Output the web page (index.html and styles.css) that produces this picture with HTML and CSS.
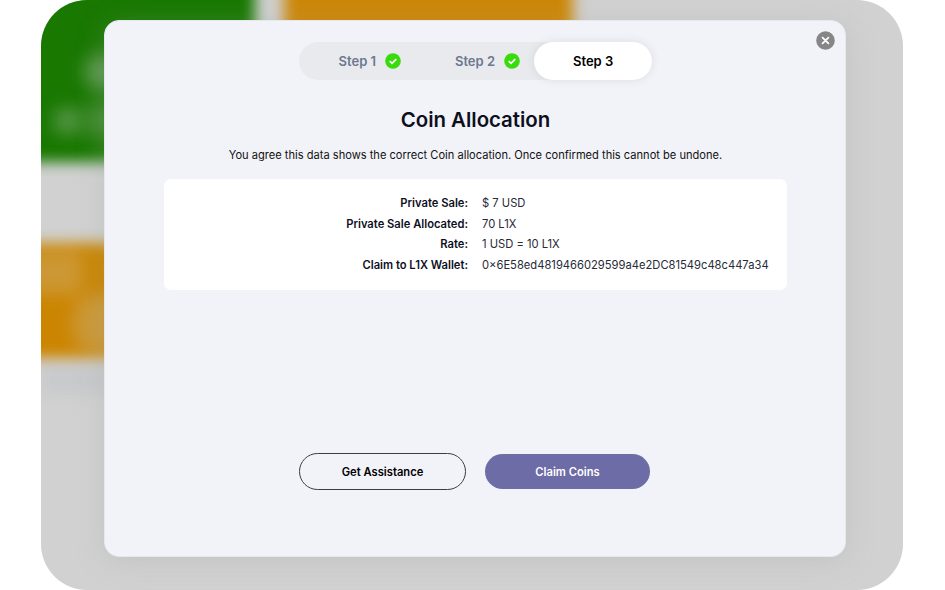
FILE: index.html
```html
<!DOCTYPE html>
<html lang="en">
<head>
	<meta charset="UTF-8">
	<meta name="viewport" content="width=device-width, initial-scale=1.0">
	<title>Coin Allocation</title>
	<link rel="stylesheet" href="styles.css">
</head>
<body>
	<div class="screen">
		<div class="backdrop">
			<div class="tile tile-green"></div>
			<div class="tile tile-orange-top"></div>
			<div class="tile tile-orange-left"></div>
			<div class="smudge smudge-icon"></div>
			<div class="smudge smudge-label"></div>
			<div class="smudge smudge-label-end"></div>
			<div class="smudge smudge-title"></div>
			<div class="smudge smudge-value"></div>
			<div class="smudge smudge-caption"></div>
		</div>
		<div class="modal">
			<button type="button" class="close" aria-label="Close">
				<svg viewBox="0 0 19 19" width="19" height="19">
					<circle cx="9.5" cy="9.5" r="9.3" fill="#868686"/>
					<path d="M6.6 6.6l5.8 5.8M12.4 6.6l-5.8 5.8" stroke="#fff" stroke-width="1.8" stroke-linecap="round"/>
				</svg>
			</button>
			<div class="steps">
				<div class="step">
					<span>Step 1</span>
					<svg class="check" viewBox="0 0 16 16">
						<circle cx="8" cy="8" r="7.8" fill="#38dc0c"/>
						<path d="M4.7 8.2l2.3 2.2 4.3-4.3" fill="none" stroke="#fff" stroke-width="1.7"/>
					</svg>
				</div>
				<div class="step">
					<span>Step 2</span>
					<svg class="check" viewBox="0 0 16 16">
						<circle cx="8" cy="8" r="7.8" fill="#38dc0c"/>
						<path d="M4.7 8.2l2.3 2.2 4.3-4.3" fill="none" stroke="#fff" stroke-width="1.7"/>
					</svg>
				</div>
				<div class="step active">
					<span>Step 3</span>
				</div>
			</div>
			<h1>Coin Allocation</h1>
			<p class="notice">You agree this data shows the correct Coin allocation. Once confirmed this cannot be undone.</p>
			<dl class="details">
				<dt>Private Sale:</dt>
				<dd>$ 7 USD</dd>
				<dt>Private Sale Allocated:</dt>
				<dd>70 L1X</dd>
				<dt>Rate:</dt>
				<dd>1 USD = 10 L1X</dd>
				<dt>Claim to L1X Wallet:</dt>
				<dd>0×6E58ed4819466029599a4e2DC81549c48c447a34</dd>
			</dl>
			<div class="actions">
				<button type="button" class="btn btn-outline">Get Assistance</button>
				<button type="button" class="btn btn-primary">Claim Coins</button>
			</div>
		</div>
	</div>
</body>
</html>
```
FILE: styles.css
```css
* {
	box-sizing: border-box;
}
body {
	margin: 0;
	background: #fff;
	font-family: Inter, "Liberation Sans", sans-serif;
	color: #0d0f1e;
}
.screen {
	position: relative;
	width: 862px;
	height: 590px;
	margin-left: 41px;
	padding: 20px 57px 33px 63px;
	border-radius: 46px;
	background: #d1d1d1;
	overflow: hidden;
}

/* blurred page behind the modal */
.backdrop {
	position: absolute;
	inset: 0;
}
.tile, .smudge {
	position: absolute;
	filter: blur(7px);
}
.tile-green {
	left: -30px;
	top: -30px;
	width: 244px;
	height: 192px;
	background: #187800;
}
.tile-orange-top {
	left: 243px;
	top: -30px;
	width: 289px;
	height: 120px;
	background: #cd8708;
}
.tile-orange-left {
	left: -30px;
	top: 243px;
	width: 240px;
	height: 115px;
	background: #cb8500;
}
.smudge {
	filter: blur(9px);
	background: rgba(209, 209, 209, 0.36);
}
.smudge-icon {
	left: 42px;
	top: 54px;
	width: 40px;
	height: 36px;
	border-radius: 50%;
}
.smudge-label {
	left: 14px;
	top: 109px;
	width: 25px;
	height: 24px;
}
.smudge-label-end {
	left: 44px;
	top: 104px;
	width: 40px;
	height: 32px;
	opacity: 0.6;
}
.smudge-title {
	left: -24px;
	top: 250px;
	width: 66px;
	height: 44px;
	opacity: 0.7;
}
.smudge-value {
	left: 32px;
	top: 296px;
	width: 64px;
	height: 56px;
	border-radius: 20px;
	opacity: 0.75;
}
.smudge-caption {
	left: 0;
	top: 370px;
	width: 94px;
	height: 20px;
	background: rgba(175, 180, 192, 0.35);
}

.modal {
	position: relative;
	display: flex;
	flex-direction: column;
	align-items: center;
	height: 537px;
	padding: 21px 58px 66px 59px;
	border: 1px solid #e6e8ec;
	border-radius: 15px;
	background: #f2f3f8;
	box-shadow: 0 4px 28px rgba(150, 160, 155, 0.28);
}
.close {
	position: absolute;
	top: 10px;
	right: 10px;
	width: 19px;
	height: 19px;
	padding: 0;
	border: none;
	background: none;
	cursor: pointer;
}
.close svg {
	display: block;
}
.steps {
	display: grid;
	grid-template-columns: repeat(3, 1fr);
	width: 353px;
	height: 38px;
	border-radius: 19px;
	background: #e9eaee;
}
.step {
	display: flex;
	align-items: center;
	justify-content: center;
	gap: 9px;
	padding-left: 24px;
	border-radius: 19px;
	font-size: 13px;
	font-weight: 600;
	color: #6d7790;
}
.step.active {
	padding-left: 0;
	background: #fff;
	color: #000;
	box-shadow: 0 0 10px rgba(60, 70, 90, 0.12);
}
.check {
	width: 16px;
	height: 16px;
}
h1 {
	margin: 27px 0 0;
	font-size: 20.4px;
	line-height: 26px;
	font-weight: 600;
}
.notice {
	margin: 13px 0 0;
	font-size: 11.1px;
	line-height: 18px;
	white-space: nowrap;
	color: #111;
}
.details {
	display: grid;
	grid-template-columns: 304px 1fr;
	column-gap: 14px;
	width: 623px;
	height: 111px;
	margin: 14.5px 0 0;
	padding: 14.5px 0 14px;
	border-radius: 7px;
	background: #fff;
	font-size: 11.2px;
	line-height: 20.5px;
}
dt {
	font-weight: 600;
	text-align: right;
}
dd {
	margin: 0;
	color: #272a38;
	white-space: nowrap;
}
.actions {
	display: flex;
	align-items: center;
	gap: 19px;
	margin: auto 2px 0 0;
}
.btn {
	width: 165px;
	height: 35px;
	padding: 0;
	border: none;
	border-radius: 19px;
	font-family: inherit;
	font-size: 11.2px;
	font-weight: 600;
	cursor: pointer;
}
.btn-outline {
	width: 167px;
	height: 37px;
	border: 1px solid #3d3d42;
	background: transparent;
	color: #000;
}
.btn-primary {
	background: #6e6ca7;
	color: #fff;
}
```
